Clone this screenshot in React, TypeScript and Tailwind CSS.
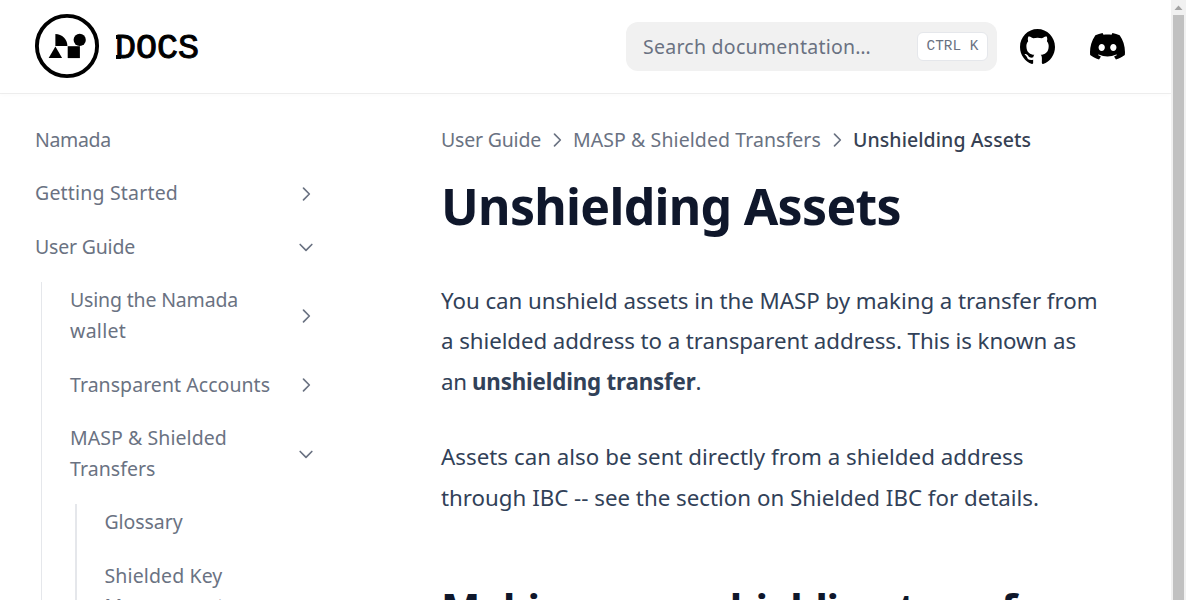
import type { ReactNode } from "react";

function Chevron({ className = "" }: { className?: string }) {
  return (
    <svg className={"size-5 shrink-0 " + className} viewBox="0 0 24 24" fill="none" stroke="currentColor" strokeWidth="2" strokeLinecap="round" strokeLinejoin="round">
      <path d="M9 5l7 7-7 7" />
    </svg>
  );
}

function Item({ children, state }: { children: ReactNode; state?: "open" | "closed" }) {
  return (
    <div className="flex items-center justify-between py-[8.6px] pr-1.5 whitespace-nowrap">
      <div>{children}</div>
      {state && <Chevron className={state === "open" ? "rotate-90" : ""} />}
    </div>
  );
}

function Logo() {
  return (
    <div className="mb-px flex items-center">
      <svg className="size-[66px]" viewBox="0 0 66 66">
        <circle cx="33" cy="33" r="30.1" fill="none" stroke="#000" strokeWidth="3.9" />
        <path d="M21.4 20.9c6.6 0 12 5.2 12 12h-12z" />
        <circle cx="45.7" cy="26.9" r="6.1" />
        <path d="M21.4 33.4l6.7 11.7H14.7z" />
        <path d="M33.7 33.2h12.2v11.9H33.7z" />
      </svg>
      <div className="relative mt-[5px] ml-[15px] font-['Liberation_Mono',monospace] text-[35px] leading-[40px] text-black [-webkit-text-stroke:1px_#000]">
        DOCS
        <span className="absolute top-[6.5px] left-[1px] h-[3.5px] w-[5px] bg-black" />
        <span className="absolute top-[26.5px] left-[1px] h-[3.5px] w-[5px] bg-black" />
      </div>
    </div>
  );
}

function Header() {
  return (
    <header className="flex h-[93px] shrink-0 items-center bg-white pr-[46px] pl-[34px] shadow-[0_2px_4px_rgba(0,0,0,0.02),0_1px_0_rgba(0,0,0,0.06)]">
      <Logo />
      <div className="ml-auto flex h-[49px] w-[371px] items-center justify-between rounded-xl bg-[#f1f1f1] pr-[9px] pl-[17px] text-gray-500">
        <span className="text-[19.5px] tracking-[0.26px]">Search documentation…</span>
        <kbd className="flex h-[29px] w-[71px] items-center justify-center rounded-md border border-gray-200 bg-white font-['Liberation_Mono',monospace] text-[14.4px] whitespace-pre">CTRL K</kbd>
      </div>
      <svg className="ml-[23px] size-[35px]" viewBox="3 3 18 18">
        <path d="M12 3C7.0275 3 3 7.12937 3 12.2276C3 16.3109 5.57625 19.7597 9.15374 20.9824C9.60374 21.0631 9.77249 20.7863 9.77249 20.5441C9.77249 20.3249 9.76125 19.5982 9.76125 18.8254C7.5 19.2522 6.915 18.2602 6.735 17.7412C6.63375 17.4759 6.19499 16.6569 5.8125 16.4378C5.4975 16.2647 5.0475 15.838 5.80124 15.8264C6.51 15.8149 7.01625 16.4954 7.18499 16.7723C7.99499 18.1679 9.28875 17.7758 9.80625 17.5335C9.885 16.9337 10.1212 16.53 10.38 16.2993C8.3775 16.0687 6.285 15.2728 6.285 11.7432C6.285 10.7397 6.63375 9.9092 7.20749 9.26326C7.1175 9.03257 6.8025 8.08674 7.2975 6.81794C7.2975 6.81794 8.05125 6.57571 9.77249 7.76377C10.4925 7.55615 11.2575 7.45234 12.0225 7.45234C12.7875 7.45234 13.5525 7.55615 14.2725 7.76377C15.9937 6.56418 16.7475 6.81794 16.7475 6.81794C17.2424 8.08674 16.9275 9.03257 16.8375 9.26326C17.4113 9.9092 17.76 10.7281 17.76 11.7432C17.76 15.2843 15.6563 16.0687 13.6537 16.2993C13.98 16.5877 14.2613 17.1414 14.2613 18.0065C14.2613 19.2407 14.25 20.2326 14.25 20.5441C14.25 20.7863 14.4188 21.0746 14.8688 20.9824C16.6554 20.364 18.2079 19.1866 19.3078 17.6162C20.4077 16.0457 20.9995 14.1611 21 12.2276C21 7.12937 16.9725 3 12 3Z" />
      </svg>
      <svg className="ml-[35px] h-[26.5px] w-[35px]" viewBox="0 5 30.67 23.25">
        <path d="M26.0015 6.9529C24.0021 6.03845 21.8787 5.37198 19.6623 5C19.3833 5.48048 19.0733 6.13144 18.8563 6.64292C16.4989 6.30193 14.1585 6.30193 11.8336 6.64292C11.6166 6.13144 11.2911 5.48048 11.0276 5C8.79575 5.37198 6.67235 6.03845 4.6869 6.9529C0.672601 12.8736 -0.41235 18.6548 0.130124 24.3585C2.79599 26.2959 5.36889 27.4739 7.89682 28.2489C8.51679 27.4119 9.07477 26.5129 9.55525 25.5675C8.64079 25.2265 7.77283 24.808 6.93587 24.312C7.15286 24.1571 7.36986 23.9866 7.57135 23.8161C12.6241 26.1255 18.0969 26.1255 23.0876 23.8161C23.3046 23.9866 23.5061 24.1571 23.7231 24.312C22.8861 24.808 22.0182 25.2265 21.1037 25.5675C21.5842 26.5129 22.1422 27.4119 22.7621 28.2489C25.2885 27.4739 27.8769 26.2959 30.5288 24.3585C31.1952 17.7559 29.4733 12.0212 26.0015 6.9529ZM10.2527 20.8402C8.73376 20.8402 7.49382 19.4608 7.49382 17.7714C7.49382 16.082 8.70276 14.7025 10.2527 14.7025C11.7871 14.7025 13.0425 16.082 13.0115 17.7714C13.0115 19.4608 11.7871 20.8402 10.2527 20.8402ZM20.4373 20.8402C18.9183 20.8402 17.6768 19.4608 17.6768 17.7714C17.6768 16.082 18.8873 14.7025 20.4373 14.7025C21.9717 14.7025 23.2271 16.082 23.1961 17.7714C23.1961 19.4608 21.9872 20.8402 20.4373 20.8402Z" />
      </svg>
    </header>
  );
}

function Sidebar() {
  return (
    <aside className="flex w-[322px] shrink-0 flex-col gap-[5.75px] pt-[23.3px] pl-[35px] text-[19.5px] leading-[30.6px] text-gray-500">
      <Item><span className="tracking-[-0.35px]">Namada</span></Item>
      <Item state="closed"><span className="tracking-[0.19px]">Getting Started</span></Item>
      <Item state="open"><span className="tracking-[-0.2px]">User Guide</span></Item>
      <div className="mt-[5px] -mb-px ml-1.5 flex flex-col gap-[5.75px] border-l border-gray-200 pl-7">
        <div className="-mt-[5px]">
          <Item state="closed">
            <span className="tracking-[-0.17px]">Using the Namada</span><br />
            <span className="tracking-[0.3px]">wallet</span>
          </Item>
        </div>
        <Item state="closed"><span className="tracking-[0.05px]">Transparent Accounts</span></Item>
        <Item state="open">
          <span className="tracking-[0.07px]">MASP &amp; Shielded</span><br />
          <span className="tracking-[0.06px]">Transfers</span>
        </Item>
        <div className="mt-[5px] ml-[5px] flex flex-col gap-[5.75px] border-l-2 border-gray-200 pl-[27.5px]">
          <div className="-mt-[5px]"><Item><span className="tracking-[-0.08px]">Glossary</span></Item></div>
          <Item>
            <span className="tracking-[0.12px]">Shielded Key</span><br />
            <span className="tracking-[-0.39px]">Management</span>
          </Item>
        </div>
      </div>
    </aside>
  );
}

function Article() {
  return (
    <main className="ml-[119px] flex-1 whitespace-nowrap text-slate-700">
      <nav className="mt-8 flex h-[30px] items-center text-[19.5px] leading-[30px] text-gray-500">
        <span className="w-[100px] tracking-[-0.2px]">User Guide</span>
        <Chevron className="mx-1.5" />
        <span className="w-[248px] tracking-[0.08px]">MASP &amp; Shielded Transfers</span>
        <Chevron className="mx-1.5" />
        <span className="font-medium tracking-[0.08px] text-gray-700">Unshielding Assets</span>
      </nav>
      <h1 className="mt-[19px] text-[50px] leading-[64px] font-bold tracking-[-0.71px] text-slate-900">Unshielding Assets</h1>
      <p className="mt-[43px] text-[22.3px] leading-[40.25px]">
        <span className="tracking-[-0.03px]">You can unshield assets in the MASP by making a transfer from</span><br />
        <span className="tracking-[-0.078px]">a shielded address to a transparent address. This is known as</span><br />
        <span className="tracking-[-0.36px]">an </span>
        <strong className="font-bold tracking-[-0.155px]">unshielding transfer</strong>.
      </p>
      <p className="mt-[35.5px] text-[22.3px] leading-[40.25px]">
        <span className="tracking-[0.027px]">Assets can also be sent directly from a shielded address</span><br />
        <span>through IBC -- see the section on Shielded IBC for details.</span>
      </p>
      <h2 className="mt-[62.5px] text-[41.7px] leading-[56px] font-bold tracking-[-1.25px] text-slate-900">Making an unshielding transfer</h2>
    </main>
  );
}

export default function App() {
  return (
    <div className="flex h-[600px] w-[1186px] overflow-hidden bg-white font-['Noto_Sans',sans-serif]">
      <div className="flex w-[1171px] flex-col overflow-hidden">
        <Header />
        <div className="flex min-h-0 flex-1">
          <Sidebar />
          <Article />
        </div>
      </div>
      <div className="flex w-[15px] flex-col items-center bg-[#f1f1f1]">
        <svg className="h-[15px] w-[15px] shrink-0" viewBox="0 0 15 15"><path d="M7.5 5.5l4 4.5h-8z" fill="#a3a3a3" /></svg>
        <div className="w-[11px] flex-1 bg-[#c1c1c1]" />
      </div>
    </div>
  );
}
